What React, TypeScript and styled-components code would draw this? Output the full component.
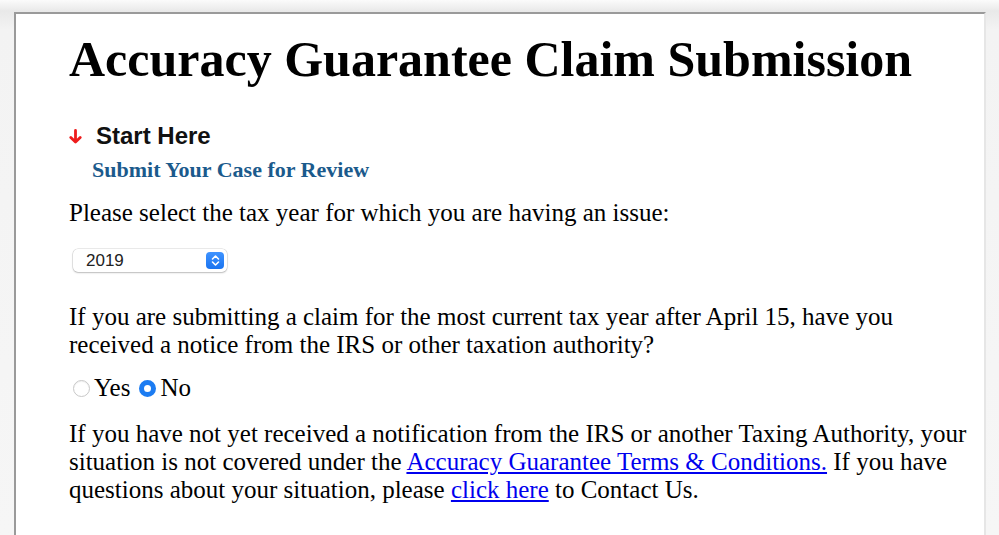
import React from "react";
import styled, { createGlobalStyle } from "styled-components";

const Global = createGlobalStyle`
  html, body { margin: 0; padding: 0; }
  body {
    width: 999px;
    height: 535px;
    overflow: hidden;
    background: linear-gradient(#fbfbfb 0px, #e9e9e9 11px, #f3f3f3 30px, #f6f6f6 100%);
    font-family: "Liberation Serif", "Times New Roman", serif;
  }
`;

const Page = styled.div`
  padding: 12px 13px 0 14px;
  height: 535px;
  box-sizing: border-box;
`;

const Panel = styled.main`
  background: #fff;
  border-left: 2px solid #9a9a9a;
  border-top: 2px solid #9a9a9a;
  border-right: 2px solid #e6e6e6;
  height: 100%;
  box-sizing: border-box;
  padding: 16px 12px 0 53px;
  color: #000;
`;

const Title = styled.h1`
  margin: 0;
  font-size: 50px;
  font-weight: bold;
  line-height: 58px;
  letter-spacing: 0;
`;

const StartRow = styled.div`
  display: flex;
  align-items: center;
  gap: 14px;
  margin-top: 35px;
  font-family: "Liberation Sans", Arial, sans-serif;
  font-weight: bold;
  font-size: 24px;
  line-height: 26px;
  color: #111;
`;

const SubTitle = styled.div`
  margin: 9px 0 0 23px;
  color: #1b5a8c;
  font-weight: bold;
  font-size: 22px;
  line-height: 24px;
`;

const Para = styled.p<{ $top: number }>`
  margin: ${(p) => p.$top}px 0 0;
  font-size: 25px;
  line-height: 28px;
`;

const SelectBox = styled.div`
  margin: 22px 0 0 4px;
  width: 154px;
  height: 23px;
  box-sizing: border-box;
  border-radius: 5px;
  background: #fff;
  box-shadow: 0 0 0 0.5px rgba(0, 0, 0, 0.16), 0 1px 2px rgba(0, 0, 0, 0.2);
  display: flex;
  align-items: center;
  justify-content: space-between;
  padding: 0 3px 0 13px;
  font-family: "Liberation Sans", Arial, sans-serif;
  font-size: 17px;
  color: #222;
`;

const Stepper = styled.span`
  width: 18px;
  height: 17px;
  border-radius: 4px;
  background: linear-gradient(#3f93ff, #1a74f0);
  display: flex;
  align-items: center;
  justify-content: center;
`;

const RadioRow = styled.div`
  display: flex;
  align-items: center;
  margin-top: 15px;
  font-size: 25px;
  line-height: 28px;
`;

const Radio = styled.span<{ $on?: boolean }>`
  width: 17px;
  height: 17px;
  border-radius: 50%;
  box-sizing: border-box;
  margin: 0 4px 0 ${(p) => (p.$on ? 9 : 4)}px;
  background: #fff;
  border: ${(p) => (p.$on ? "5.5px solid #1c7cf2" : "1px solid #c8c8c8")};
  box-shadow: ${(p) => (p.$on ? "none" : "inset 0 1px 1px rgba(0,0,0,0.06)")};
`;

const Link = styled.a`
  color: #0000ee;
  text-decoration: underline;
`;

export default function App() {
  return (
    <>
      <Global />
      <Page>
        <Panel>
          <Title>Accuracy Guarantee Claim Submission</Title>
          <StartRow>
            <svg width="13" height="15" viewBox="0 0 13 15">
              <path d="M6.5 1.5 V13 M1.8 8.4 L6.5 13 L11.2 8.4" stroke="#ee1c1c" strokeWidth="2.8" fill="none" strokeLinecap="round" strokeLinejoin="round" />
            </svg>
            <span>Start Here</span>
          </StartRow>
          <SubTitle>Submit Your Case for Review</SubTitle>
          <Para $top={17}>Please select the tax year for which you are having an issue:</Para>
          <SelectBox>
            <span>2019</span>
            <Stepper>
              <svg width="9" height="13" viewBox="0 0 9 13">
                <path d="M1.5 5 L4.5 2 L7.5 5 M1.5 8 L4.5 11 L7.5 8" stroke="#fff" strokeWidth="1.6" fill="none" strokeLinecap="round" strokeLinejoin="round" />
              </svg>
            </Stepper>
          </SelectBox>
          <Para $top={31}>
            If you are submitting a claim for the most current tax year after April 15, have you received a notice from the IRS or other taxation authority?
          </Para>
          <RadioRow>
            <Radio />
            <span>Yes</span>
            <Radio $on />
            <span>No</span>
          </RadioRow>
          <Para $top={18}>
            If you have not yet received a notification from the IRS or another Taxing Authority, your situation is not covered under the{" "}
            <Link href="#">Accuracy Guarantee Terms &amp; Conditions.</Link> If you have questions about your situation, please{" "}
            <Link href="#">click here</Link> to Contact Us.
          </Para>
        </Panel>
      </Page>
    </>
  );
}
